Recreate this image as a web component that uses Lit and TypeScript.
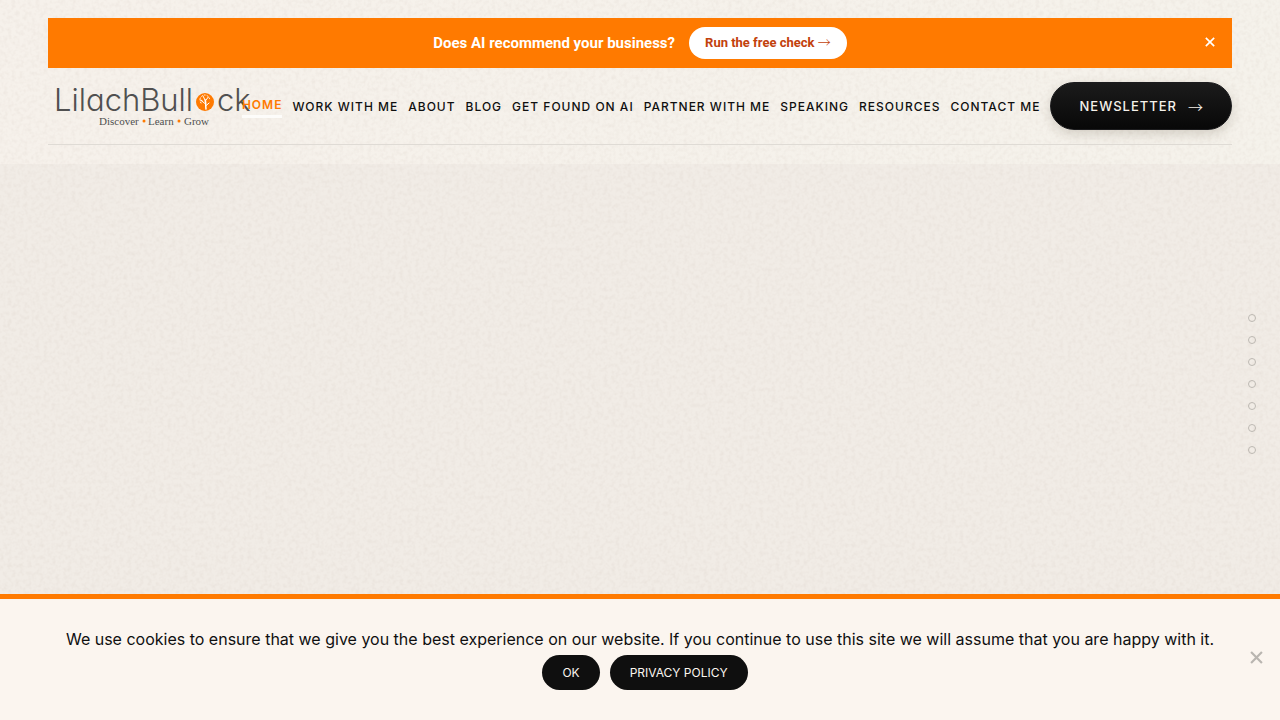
import { LitElement, html, css, svg } from "lit";
import { customElement, state } from "lit/decorators.js";

const NAV = [
  "Home",
  "Work with me",
  "About",
  "Blog",
  "Get found on AI",
  "Partner with me",
  "Speaking",
  "Resources",
  "Contact me",
];

const SECTIONS = ["Intro", "Services", "About", "Results", "Speaking", "Articles", "Contact"];

@customElement("site-logo")
export class SiteLogo extends LitElement {
  static styles = css`
    :host {
      display: block;
      flex: none;
      width: 210px;
      height: 48px;
    }
    .art {
      display: block;
      overflow: visible;
    }
    .name {
      font: 300 31px Inter, Lato, sans-serif;
      font-feature-settings: "cv11";
      fill: #505050;
    }
    .tag {
      font: 400 11px "Liberation Serif", serif;
      fill: #505050;
    }
    .dot {
      fill: #ff7a00;
    }
    .tree {
      fill: none;
      stroke: #fff;
      stroke-linecap: round;
    }
  `;

  render() {
    return html`<svg class="art" width="210" height="48" viewBox="0 0 210 48" role="img" aria-label="LilachBullock">
      ${svg`
        <text class="name" x="6" y="29">LilachBull</text>
        <circle class="dot" cx="157" cy="20" r="9" />
        <g class="tree">
          <path stroke-width="1.500" d="M158 27c-.6-3 .2-6-.8-9" />
          <path stroke-width="1" d="M157.600 24l3.500-3M157.600 22l-4.500-3.500M157.300 19l3-4M157 18l-2-4M154 18.500l-2-.5" />
          <path stroke-width="1" stroke-dasharray="1 2" d="M152 17c1-3 3-4 5-4s4.500 2 5 5.500M153 21l-1-2" />
        </g>
        <text class="name" x="169" y="29">ck</text>
        <text class="tag" x="51" y="43">Discover</text>
        <circle class="dot" cx="96" cy="39" r="1.500" />
        <text class="tag" x="100" y="43">Learn</text>
        <circle class="dot" cx="131" cy="39" r="1.500" />
        <text class="tag" x="136" y="43">Grow</text>
      `}
    </svg>`;
  }
}

@customElement("app-root")
export class AppRoot extends LitElement {
  @state() private promo = true;
  @state() private cookies = true;

  static styles = css`
    :host {
      position: relative;
      display: flex;
      flex-direction: column;
      min-height: 100vh;
      background: #f1ece6;
      color: #0f0f0f;
      font-family: Inter, "Open Sans", sans-serif;
    }
    .grain {
      position: absolute;
      inset: 0;
      width: 100%;
      height: 100%;
      pointer-events: none;
    }
    button {
      font: inherit;
      border: 0;
      cursor: pointer;
    }
    a {
      color: inherit;
      text-decoration: none;
    }
    .header {
      padding: 18px 48px 19px;
      background: linear-gradient(100deg, #f6f1eb, #f5f2eb);
    }
    .promo {
      position: relative;
      z-index: 1;
      display: flex;
      align-items: center;
      justify-content: center;
      gap: 14px;
      height: 50px;
      background: #ff7a00;
      color: #fff;
      font: 700 15px Roboto, sans-serif;
    }
    .check {
      height: 32px;
      padding: 0 16px;
      border-radius: 16px;
      background: #fff;
      color: #c2410c;
      font-size: 13px;
      line-height: 32px;
    }
    .dismiss {
      position: absolute;
      top: 14px;
      right: 12px;
      display: grid;
      place-items: center;
      width: 20px;
      height: 20px;
      padding: 0;
      background: none;
      color: #fff;
    }
    .bar {
      position: relative;
      z-index: 1;
      display: flex;
      align-items: center;
      justify-content: space-between;
      gap: 10px;
      height: 76px;
      border-bottom: 1px solid #dfdbd5;
    }
    .brand {
      width: 180px;
      flex: none;
    }
    .menu {
      display: flex;
      flex: 1;
      min-width: 0;
      justify-content: flex-end;
      gap: 10px;
      padding-top: 2px;
      font-size: 12px;
      font-weight: 500;
      line-height: 20px;
      letter-spacing: 1px;
      text-transform: uppercase;
      white-space: nowrap;
    }
    .current {
      margin-top: -2px;
      border-bottom: 3px solid #fdfcfa;
      color: #ff7a00;
      font-weight: 600;
    }
    .news {
      display: flex;
      flex: none;
      align-items: center;
      gap: 11px;
      box-sizing: border-box;
      height: 48px;
      padding: 0 28px;
      border: 1px solid #1c1c1e;
      border-radius: 24px;
      background: linear-gradient(#1b1b1b, #080808);
      box-shadow: 0 4px 12px rgb(60 50 30 / 18%);
      color: #f5f1ea;
      font-size: 13px;
      font-weight: 500;
      letter-spacing: 1px;
    }
    .arrow {
      font-family: "Noto Sans CJK JP", sans-serif;
      font-weight: 300;
      line-height: 1;
    }
    .news .arrow {
      font-size: 15px;
      letter-spacing: 0;
    }
    .main {
      display: flex;
      flex: 1;
      align-items: center;
      justify-content: flex-end;
      padding: 10px 24px 0;
    }
    .dots {
      display: grid;
      gap: 14px;
    }
    .pip {
      box-sizing: border-box;
      width: 8px;
      height: 8px;
      border: 1px solid #bdb9b3;
      border-radius: 50%;
    }
    .cookie {
      position: relative;
      display: flex;
      flex-direction: column;
      align-items: center;
      gap: 4px;
      padding: 28px 48px 30px;
      border-top: 5px solid #ff7a00;
      background: #fbf5ef;
    }
    .note {
      margin: 0;
      font-size: 16px;
      line-height: 24px;
      text-align: center;
    }
    .actions {
      display: flex;
      gap: 10px;
      padding-left: 10px;
    }
    .pill {
      padding: 0 20px;
      border-radius: 18px;
      background: #0f0f0f;
      color: #fbf5ef;
      font-size: 12px;
      line-height: 35px;
    }
    .close {
      position: absolute;
      top: 48px;
      right: 14px;
      display: grid;
      place-items: center;
      width: 20px;
      height: 20px;
      padding: 0;
      background: none;
      color: #b9b5b0;
    }
  `;

  private cross(size: number, width: number) {
    return html`<svg width=${size} height=${size} viewBox="0 0 12 12" fill="none" stroke="currentColor" stroke-width=${width} aria-hidden="true">
      <path d="M1 1l10 10M11 1L1 11" />
    </svg>`;
  }

  render() {
    return html`
      <header class="header">
        ${this.promo
          ? html`<div class="promo">
              <span>Does AI recommend your business?</span>
              <a class="check" href="#check">Run the free check <span class="arrow">→</span></a>
              <button class="dismiss" aria-label="Dismiss" @click=${() => (this.promo = false)}>${this.cross(10, 2)}</button>
            </div>`
          : null}
        <div class="bar">
          <a class="brand" href="#home"><site-logo></site-logo></a>
          <nav class="menu" aria-label="Main">
            ${NAV.map((label, i) => html`<a class=${i === 0 ? "current" : "item"} href="#">${label}</a>`)}
          </nav>
          <a class="news" href="#newsletter">NEWSLETTER <span class="arrow">→</span></a>
        </div>
      </header>
      <main class="main">
        <nav class="dots" aria-label="Sections">
          ${SECTIONS.map((name) => html`<a class="pip" href="#" aria-label=${name}></a>`)}
        </nav>
      </main>
      <svg class="grain" aria-hidden="true">
        <filter id="paper">
          <feTurbulence type="fractalNoise" baseFrequency="0.25" numOctaves="3" seed="4" />
          <feColorMatrix values="0 0 0 0 0.5  0 0 0 0 0.4  0 0 0 0 0.34  0.25 0 0 0 -0.1" />
        </filter>
        <rect width="100%" height="100%" filter="url(#paper)" />
      </svg>
      ${this.cookies
        ? html`<footer class="cookie">
            <p class="note">
              We use cookies to ensure that we give you the best experience on our website. If you continue to use this
              site we will assume that you are happy with it.
            </p>
            <div class="actions">
              <button class="pill" @click=${() => (this.cookies = false)}>OK</button>
              <a class="pill" href="#privacy">PRIVACY POLICY</a>
            </div>
            <button class="close" aria-label="Close" @click=${() => (this.cookies = false)}>${this.cross(13, 2)}</button>
          </footer>`
        : null}
    `;
  }
}
